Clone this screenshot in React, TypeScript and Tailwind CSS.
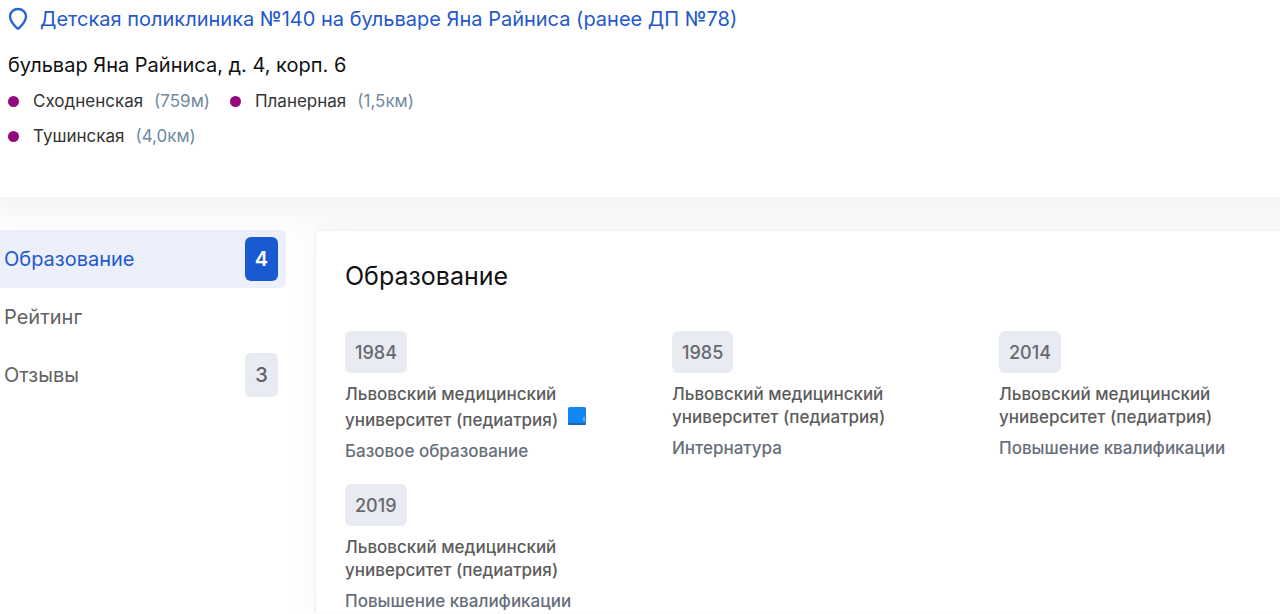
import clsx from "clsx";

type Station = {
  name: string;
  distance: string;
};

type Education = {
  year: number;
  place: string;
  kind: string;
  hasDiploma?: boolean;
};

const stations: Station[] = [
  { name: "Сходненская", distance: "(759м)" },
  { name: "Планерная", distance: "(1,5км)" },
  { name: "Тушинская", distance: "(4,0км)" },
];

const sections = [
  { id: "education", title: "Образование", count: 4 },
  { id: "rating", title: "Рейтинг" },
  { id: "reviews", title: "Отзывы", count: 3 },
];

const educations: Education[] = [
  { year: 1984, place: "Львовский медицинский университет (педиатрия)", kind: "Базовое образование", hasDiploma: true },
  { year: 1985, place: "Львовский медицинский университет (педиатрия)", kind: "Интернатура" },
  { year: 2014, place: "Львовский медицинский университет (педиатрия)", kind: "Повышение квалификации" },
  { year: 2019, place: "Львовский медицинский университет (педиатрия)", kind: "Повышение квалификации" },
];

function PinIcon() {
  return (
    <svg width="20" height="24" viewBox="0 0 20 24" fill="none" aria-hidden="true">
      <path
        d="M10 2C5.600 2 2 5.100 2 9.300c0 4 2.800 7.900 6.700 11.500.8.8 1.800.8 2.600 0C15.200 17.200 18 13.300 18 9.300 18 5.100 14.400 2 10 2Z"
        stroke="#2b62d4"
        strokeWidth="2.4"
      />
    </svg>
  );
}

function DiplomaIcon() {
  return (
    <svg className="ml-1 inline-block align-baseline" width="20" height="20" viewBox="0 0 20 20" aria-hidden="true">
      <rect x="1" y="1" width="18" height="18" rx="1.500" fill="#1287f3" />
      <path d="M1 17h18v.5a1.500 1.500 0 0 1-1.500 1.500h-15A1.500 1.500 0 0 1 1 17.500Z" fill="#1766b8" />
      <path d="M18.500 2v16" stroke="#2f78c4" strokeWidth="1" />
      <path d="M17 11v4" stroke="#a8d4fb" strokeWidth="1" />
    </svg>
  );
}

function Clinic() {
  return (
    <header className="relative h-[197px] bg-white px-2 pt-1 shadow-[0_-12px_40px_24px_rgba(0,0,0,0.06)]">
      <a href="#clinic" className="flex items-center gap-3 text-[20px] leading-[30px] text-[#2458cc]">
        <PinIcon />
        Детская поликлиника №140 на бульваре Яна Райниса (ранее ДП №78)
      </a>
      <p className="mt-4 text-[20px] leading-[30px] text-[#111]">бульвар Яна Райниса, д. 4, корп. 6</p>
      <ul className="mt-1 flex max-w-[440px] flex-wrap gap-x-5 text-[17px] leading-[35px]">
        {stations.map((station) => (
          <li key={station.name} className="flex items-center">
            <span className="mr-3.5 h-[11px] w-[11px] rounded-full bg-[#94077f]" />
            <span className="mr-[11px] text-[#333]">{station.name}</span>
            <span className="text-[#7089a0]">{station.distance}</span>
          </li>
        ))}
      </ul>
    </header>
  );
}

function Sidebar() {
  return (
    <nav className="w-[286px] shrink-0 pt-px">
      {sections.map((section, i) => (
        <a
          key={section.id}
          href={`#${section.id}`}
          className={clsx(
            "flex h-[58px] items-center justify-between rounded-r-md pr-2 pl-1 text-[20px]",
            i === 0 ? "bg-[#ebf0fc] text-[#2458cc]" : "text-[#636363]"
          )}
        >
          {section.title}
          {section.count && (
            <span
              className={clsx(
                "flex h-11 w-[33px] items-center justify-center rounded-md",
                i === 0 ? "bg-[#195ad1] font-semibold text-white" : "bg-[#e8ebf2] font-medium text-[#5f6268]"
              )}
            >
              {section.count}
            </span>
          )}
        </a>
      ))}
    </nav>
  );
}

function EducationItem({ item }: { item: Education }) {
  return (
    <li className="pr-8 text-[17px] leading-[23px] font-medium">
      <span className="inline-flex h-[42px] items-center rounded-md bg-[#e8ebf2] px-2.5 text-[18px] text-[#66696e]">
        {item.year}
      </span>
      <p className="mt-2.5 text-[#5c5c5c]">
        {item.place} {item.hasDiploma && <DiplomaIcon />}
      </p>
      <p className="mt-2 text-[#666e7a]">{item.kind}</p>
    </li>
  );
}

export default function App() {
  return (
    <div className="min-h-screen overflow-hidden bg-white font-['Inter',sans-serif]">
      <Clinic />
      <main className="mt-8 flex gap-7">
        <Sidebar />
        <section
          id="education"
          className="relative -mr-12 grow rounded-t-md border-2 border-b-0 border-[#f1f3f7] bg-white pt-[27px] pl-[29px] shadow-[0_0_40px_rgba(0,0,0,0.04)]"
        >
          <h2 className="text-[25px] leading-9 text-[#111]">Образование</h2>
          <ul className="mt-[37px] grid grid-cols-3 gap-y-[21px]">
            {educations.map((item) => (
              <EducationItem key={item.year} item={item} />
            ))}
          </ul>
        </section>
      </main>
    </div>
  );
}
